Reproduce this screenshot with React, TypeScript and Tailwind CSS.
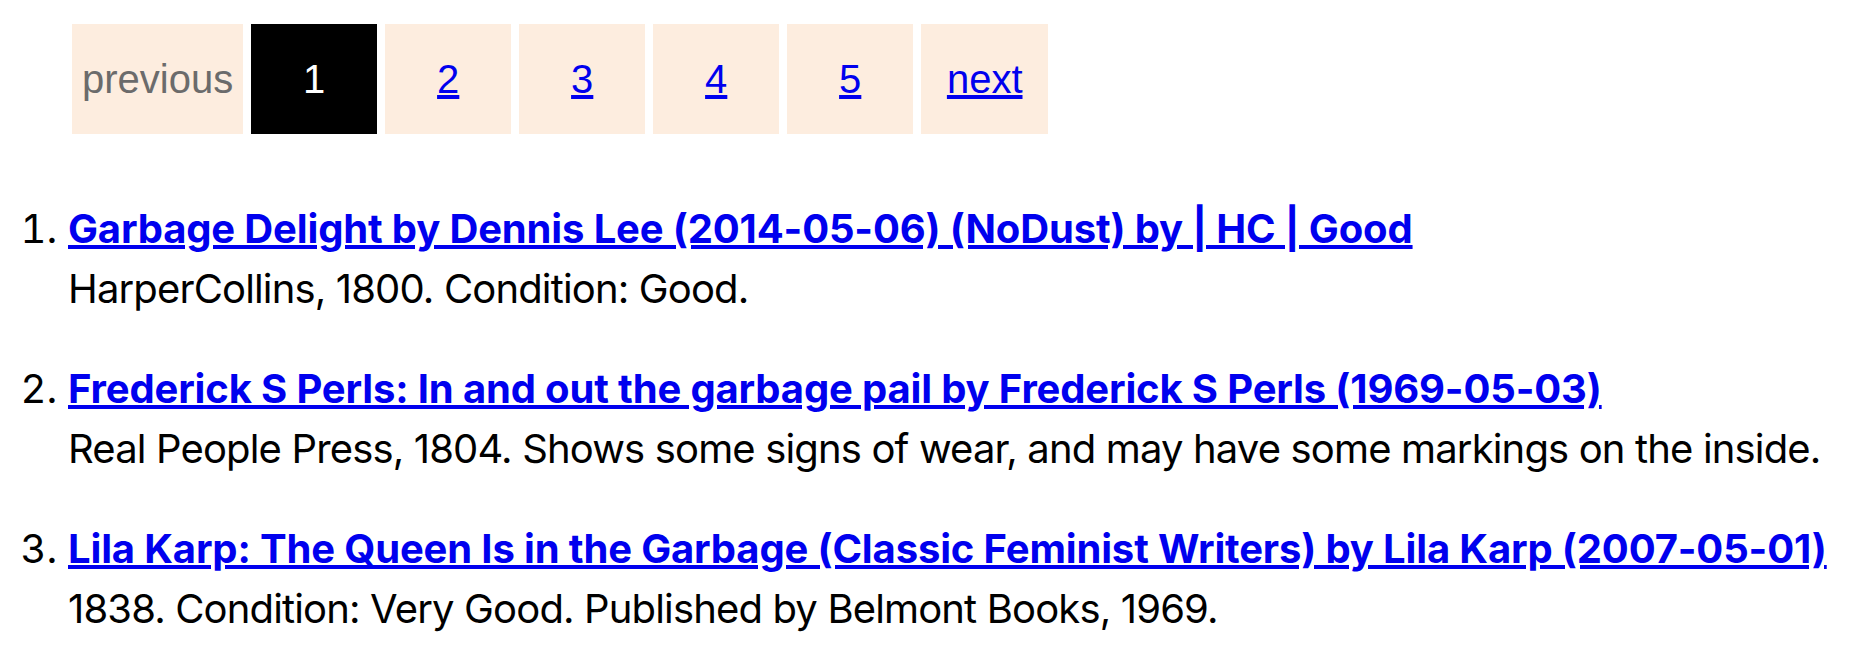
const pages = ["1", "2", "3", "4", "5"];

interface Listing {
  title: string;
  detail: string;
}

const listings: Listing[] = [
  {
    title: "Garbage Delight by Dennis Lee (2014-05-06) (NoDust) by | HC | Good",
    detail: "HarperCollins, 1800. Condition: Good.",
  },
  {
    title:
      "Frederick S Perls: In and out the garbage pail by Frederick S Perls (1969-05-03)",
    detail:
      "Real People Press, 1804. Shows some signs of wear, and may have some markings on the inside.",
  },
  {
    title:
      "Lila Karp: The Queen Is in the Garbage (Classic Feminist Writers) by Lila Karp (2007-05-01)",
    detail: "1838. Condition: Very Good. Published by Belmont Books, 1969.",
  },
];

export default function App() {
  return (
    <div className="min-h-screen bg-white text-black">
      {/* pager */}
      <div className="flex gap-[8px] pl-[72px] pt-[24px] font-['Liberation_Sans',Arial,sans-serif] text-[40px] leading-none">
        <span className="flex h-[110px] min-w-[126px] items-center justify-center bg-[#fdeddf] px-[10px] text-[#6b6b6b]">
          previous
        </span>
        {pages.map((p) =>
          p === "1" ? (
            <span
              key={p}
              className="flex h-[110px] min-w-[126px] items-center justify-center bg-black text-white"
            >
              {p}
            </span>
          ) : (
            <a
              key={p}
              href="#"
              className="flex h-[110px] min-w-[126px] items-center justify-center bg-[#fdeddf] text-[#0000ee] underline"
            >
              {p}
            </a>
          )
        )}
        <a
          href="#"
          className="flex h-[110px] min-w-[127px] items-center justify-center bg-[#fdeddf] px-[9px] text-[#0000ee] underline"
        >
          next
        </a>
      </div>

      <ol className="mt-[65px] list-decimal pl-[68px] font-['Inter','Noto_Sans',sans-serif] text-[40px] leading-[60px]">
        {listings.map((item, i) => (
          <li key={i} className="mb-[40px]">
            <a
              href="#"
              className="font-bold tracking-[-0.15px] text-[#0000ee] underline"
            >
              {item.title}
            </a>
            <div className="tracking-[-0.85px]">{item.detail}</div>
          </li>
        ))}
      </ol>
    </div>
  );
}
